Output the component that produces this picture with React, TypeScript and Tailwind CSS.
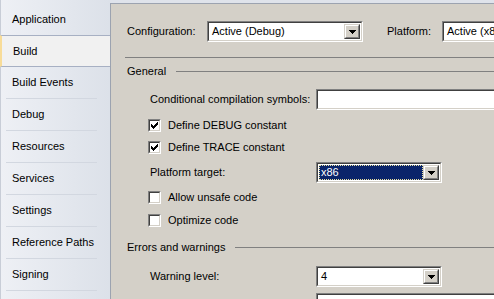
import React from "react";

const tabs = [
  "Application",
  "Build",
  "Build Events",
  "Debug",
  "Resources",
  "Services",
  "Settings",
  "Reference Paths",
  "Signing",
];

function Sunken({ className = "", children }: { className?: string; children?: React.ReactNode }) {
  return (
    <div className={`shrink-0 border border-t-[#808080] border-l-[#808080] border-b-white border-r-white ${className}`}>
      <div className="h-full border border-t-[#404040] border-l-[#404040] border-b-[#d4d0c8] border-r-[#d4d0c8] bg-white">
        {children}
      </div>
    </div>
  );
}

function DropButton() {
  return (
    <div className="w-[16px] h-full border border-t-[#d4d0c8] border-l-[#d4d0c8] border-b-[#404040] border-r-[#404040]">
      <div className="h-full flex items-center justify-center bg-[#d4d0c8] border border-t-white border-l-white border-b-[#808080] border-r-[#808080]">
        <svg width="7" height="4" viewBox="0 0 7 4" shapeRendering="crispEdges">
          <path d="M0 0h7v1h-1v1h-1v1h-1v1h-1v-1h-1v-1h-1v-1h-1z" fill="#000" />
        </svg>
      </div>
    </div>
  );
}

function Combo({ value, className = "", selected = false }: { value: string; className?: string; selected?: boolean }) {
  return (
    <Sunken className={`h-[21px] ${className}`}>
      <div className="flex h-full p-px">
        {selected ? (
          <div className="flex-1 flex items-center bg-[#0a246a] text-white border border-dotted border-[#e8e0a0] pl-px">
            {value}
          </div>
        ) : (
          <div className="flex-1 flex items-center pl-[2px]">{value}</div>
        )}
        <DropButton />
      </div>
    </Sunken>
  );
}

function Check({ label, checked = false }: { label: string; checked?: boolean }) {
  return (
    <div className="flex items-center h-4">
      <Sunken className="ml-[37px] w-[13px] h-[13px]">
        {checked && (
          <svg width="9" height="9" viewBox="0 0 9 9" shapeRendering="crispEdges" className="block">
            <path
              d="M7 1h1v3h-1v1h-1v1h-1v1h-1v1h-1v-1h-1v-1h-1v-3h1v1h1v1h1v-1h1v-1h1v-1h1z"
              fill="#000"
            />
          </svg>
        )}
      </Sunken>
      <span className="ml-[7px]">{label}</span>
    </div>
  );
}

export default function App() {
  return (
    <div className="w-[494px] h-[299px] flex overflow-hidden bg-[#dfe3eb] font-['Liberation_Sans',Arial,sans-serif] text-[11px] text-black">
      <nav className="w-[110px] shrink-0 pt-[3px] border-l border-[#c8cdd7] bg-linear-to-r from-[#eef0f5] to-[#dce1e9]">
        {tabs.map((t, i) =>
          t === "Build" ? (
            <div
              key={t}
              className="h-[32px] -ml-px flex items-center pl-[11px] bg-[#f1f1f1] border-y border-[#a7b0c3] border-l-2 border-l-[#f8dc98]"
            >
              {t}
            </div>
          ) : (
            <div key={t} className="h-[32px] flex flex-col">
              <div className="flex-1 flex items-center pl-[11px]">{t}</div>
              {i > 1 && <div className="h-px mx-[5px] mr-[13px] bg-[#d2d7e0]" />}
            </div>
          )
        )}
      </nav>

      <main className="flex-1 mt-[3px] overflow-hidden bg-[#d4d0c8] border-l border-t border-[#9ca3b0]">
        <div className="mt-[17px] h-[21px] flex items-center pl-[16px]">
          <span className="w-[80px] shrink-0">Configuration:</span>
          <Combo value="Active (Debug)" className="w-[156px]" />
          <span className="ml-[24px] w-[55px] shrink-0">Platform:</span>
          <Combo value="Active (x86)" className="w-[120px]" />
        </div>

        <div className="mt-[15px] ml-[14px] h-px bg-[#808080]" />

        <div className="mt-[5px] h-4 flex items-center pl-[16px]">
          <span>General</span>
          <div className="flex-1 h-px ml-[10px] bg-[#808080]" />
        </div>

        <div className="mt-[10px] h-[21px] flex items-center pl-[39px]">
          <span className="w-[166px] shrink-0">Conditional compilation symbols:</span>
          <Sunken className="w-[200px] h-[21px]" />
        </div>

        <div className="mt-[7px]">
          <Check label="Define DEBUG constant" checked />
        </div>
        <div className="mt-[6px]">
          <Check label="Define TRACE constant" checked />
        </div>

        <div className="mt-[7px] h-[21px] flex items-center pl-[39px]">
          <span className="w-[166px] shrink-0">Platform target:</span>
          <Combo value="x86" className="w-[126px]" selected />
        </div>

        <div className="mt-[6px]">
          <Check label="Allow unsafe code" />
        </div>
        <div className="mt-[7px]">
          <Check label="Optimize code" />
        </div>

        <div className="mt-[11px] h-4 flex items-center pl-[16px]">
          <span>Errors and warnings</span>
          <div className="flex-1 h-px ml-[10px] bg-[#808080]" />
        </div>

        <div className="mt-[11px] h-[21px] flex items-center pl-[39px]">
          <span className="w-[166px] shrink-0">Warning level:</span>
          <Combo value="4" className="w-[126px]" />
        </div>

        <div className="mt-[6px] h-[21px] flex items-center pl-[205px]">
          <Sunken className="w-[200px] h-[21px]" />
        </div>
      </main>
    </div>
  );
}
